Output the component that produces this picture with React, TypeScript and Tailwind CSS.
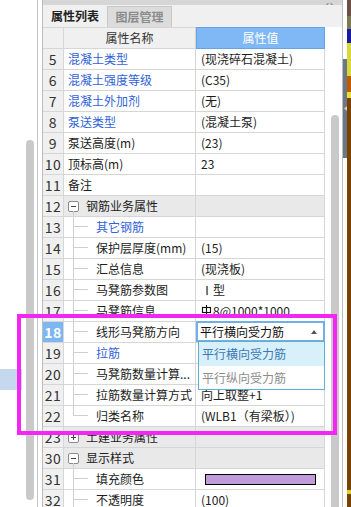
import React from "react";

type Row = {
  n: number;
  name: string;
  value?: string;
  kind?: "plain" | "group" | "child";
  blue?: boolean;
  last?: boolean;
  open?: boolean;
  special?: "rebar" | "dropdown" | "swatch";
};

const rows: Row[] = [
  { n: 5, name: "混凝土类型", value: "(现浇碎石混凝土)", blue: true },
  { n: 6, name: "混凝土强度等级", value: "(C35)", blue: true },
  { n: 7, name: "混凝土外加剂", value: "(无)", blue: true },
  { n: 8, name: "泵送类型", value: "(混凝土泵)", blue: true },
  { n: 9, name: "泵送高度(m)", value: "(23)" },
  { n: 10, name: "顶标高(m)", value: "23" },
  { n: 11, name: "备注", value: "" },
  { n: 12, name: "钢筋业务属性", kind: "group", open: true },
  { n: 13, name: "其它钢筋", kind: "child", blue: true },
  { n: 14, name: "保护层厚度(mm)", value: "(15)", kind: "child" },
  { n: 15, name: "汇总信息", value: "(现浇板)", kind: "child" },
  { n: 16, name: "马凳筋参数图", value: "Ⅰ型", kind: "child" },
  { n: 17, name: "马凳筋信息", value: "8@1000*1000", kind: "child", special: "rebar" },
  { n: 18, name: "线形马凳筋方向", kind: "child", special: "dropdown" },
  { n: 19, name: "拉筋", kind: "child", blue: true },
  { n: 20, name: "马凳筋数量计算...", value: "", kind: "child" },
  { n: 21, name: "拉筋数量计算方式", value: "向上取整+1", kind: "child" },
  { n: 22, name: "归类名称", value: "(WLB1（有梁板）)", kind: "child", last: true },
  { n: 23, name: "土建业务属性", kind: "group", open: false },
  { n: 30, name: "显示样式", kind: "group", open: true },
  { n: 31, name: "填充颜色", kind: "child", special: "swatch" },
  { n: 32, name: "不透明度", value: "(100)", kind: "child" },
];

function Toggle({ open }: { open?: boolean }) {
  return (
    <div className="relative w-[11px] h-[11px] shrink-0 border border-[#8a8a8a] rounded-[2px] bg-white flex items-center justify-center">
      <div className="w-[5px] h-px bg-[#444]" />
      {!open && <div className="absolute w-px h-[5px] bg-[#444]" />}
    </div>
  );
}

function RebarMark() {
  return (
    <svg width="11" height="12" viewBox="0 0 11 12" className="shrink-0 mr-px">
      <rect x="1.5" y="2.5" width="8" height="5" fill="none" stroke="#111" strokeWidth="1.1" />
      <line x1="5.5" y1="0" x2="5.5" y2="10.5" stroke="#111" strokeWidth="1.1" />
      <line x1="0.5" y1="10.5" x2="10.5" y2="10.5" stroke="#111" strokeWidth="1.1" />
    </svg>
  );
}

function NameCell({ r }: { r: Row }) {
  const color = r.blue ? "text-[#2f62d8]" : "text-[#1c1c1c]";
  if (r.kind === "group") {
    return (
      <div className="relative w-[132px] shrink-0 flex items-center pl-[4px] bg-[#e9e9e9] border-r border-b border-[#d6d6d6]">
        <Toggle open={r.open} />
        <span className="ml-[7px] text-[#1c1c1c]">{r.name}</span>
        {r.open && <div className="absolute left-[9px] bottom-0 h-[5px] w-px bg-[#cfcfcf]" />}
      </div>
    );
  }
  if (r.kind === "child") {
    return (
      <div className="w-[132px] shrink-0 flex items-stretch bg-white border-r border-b border-[#d6d6d6]">
        <div className="w-[9px] shrink-0" />
        <div className="w-[15px] shrink-0 flex flex-col">
          <div className="h-[10px] shrink-0 border-l border-b border-[#cfcfcf]" />
          <div className={`flex-1 border-l ${r.last ? "border-transparent" : "border-[#cfcfcf]"}`} />
        </div>
        <span className={`ml-[8px] self-center whitespace-nowrap ${color}`}>{r.name}</span>
      </div>
    );
  }
  return (
    <div className="w-[132px] shrink-0 flex items-center pl-[4px] bg-white border-r border-b border-[#d6d6d6]">
      <span className={`whitespace-nowrap ${color}`}>{r.name}</span>
    </div>
  );
}

function ValueCell({ r }: { r: Row }) {
  const group = r.kind === "group";
  if (r.special === "dropdown") {
    return (
      <div className="relative w-[129px] shrink-0 border-r border-b border-[#d6d6d6] bg-white">
        <div className="absolute -top-px left-0 right-[-1px] h-[21px] border-2 border-[#72aee9] bg-white flex items-center pl-[2px] pr-[6px] z-10">
          <span className="flex-1 text-[#111]">平行横向受力筋</span>
          <svg width="6" height="4" viewBox="0 0 6 4">
            <polygon points="3,0 6,4 0,4" fill="#555" />
          </svg>
        </div>
        <div className="absolute top-[19px] left-[2px] right-[-1px] border border-[#5eafd2] bg-white z-20 flex flex-col">
          <div className="h-[24px] flex items-center pl-[3px] bg-[#d8f0fa] text-[#3b78b6]">平行横向受力筋</div>
          <div className="h-[23px] flex items-center pl-[3px] text-[#8d8d8d]">平行纵向受力筋</div>
        </div>
      </div>
    );
  }
  return (
    <div className={`w-[129px] shrink-0 flex items-center pl-[5px] border-r border-b border-[#d6d6d6] whitespace-nowrap text-[#1c1c1c] ${group ? "bg-[#e9e9e9]" : "bg-white"}`}>
      {r.special === "rebar" && <RebarMark />}
      {r.special === "swatch" ? (
        <div className="ml-[4px] w-[111px] h-[11px] border border-black bg-[#c09ad9]" />
      ) : (
        <span>{r.value}</span>
      )}
    </div>
  );
}

function TableRow({ r }: { r: Row }) {
  const sel = r.special === "dropdown";
  return (
    <div className="flex h-[21px] shrink-0">
      <div
        className={`w-[21px] shrink-0 flex items-center justify-center border-r border-b border-[#d6d6d6] text-[14px] tracking-[0.5px] ${
          sel ? "bg-[#7db7f3] text-white font-bold" : "bg-[#f0f0f0] text-[#333]"
        }`}
      >
        {r.n}
      </div>
      <NameCell r={r} />
      <ValueCell r={r} />
    </div>
  );
}

export default function App() {
  return (
    <div className="relative w-[351px] h-[507px] overflow-hidden bg-white flex font-['Noto_Sans_CJK_SC',sans-serif] text-[12px] leading-none">
      {/* left side */}
      <div className="w-[22px] shrink-0 pt-[369px]">
        <div className="h-[21px] bg-[#c6d8ee]" />
      </div>
      <div className="w-[4px] shrink-0" />
      <div className="w-[8px] shrink-0 pt-[140px]">
        <div className="h-[360px] rounded-full bg-[#c9c9c9]" />
      </div>
      <div className="w-[3px] shrink-0" />
      <div className="w-px shrink-0 bg-[#c4c4c4]" />
      <div className="w-[4px] shrink-0" />

      {/* panel */}
      <div className="w-[301px] shrink-0 flex flex-col border-x border-[#bdbdbd] overflow-hidden">
        <div className="h-[5px] shrink-0 bg-[#d6d6d6] flex justify-end items-end overflow-hidden">
          <div className="relative w-[9px] h-[3px] mr-[8px]">
            <div className="absolute left-0 bottom-0 w-[4px] h-px bg-[#888] rotate-[-45deg]" />
            <div className="absolute right-0 bottom-0 w-[4px] h-px bg-[#888] rotate-[45deg]" />
          </div>
        </div>
        <div className="h-[22px] shrink-0 flex bg-[#f0f0f0]">
          <div className="w-[64px] flex items-center justify-center font-bold text-[#222]">属性列表</div>
          <div className="w-[65px] mt-px flex items-center justify-center font-bold text-[#8c8c8c] bg-[#dcdcdc] border-x border-t border-[#c8c8c8]">
            图层管理
          </div>
        </div>
        <div className="flex flex-1 min-h-0">
          <div className="w-[282px] shrink-0 flex flex-col">
            <div className="flex h-[22px] shrink-0 border-t border-[#d6d6d6]">
              <div className="w-[21px] shrink-0 bg-[#f0f0f0] border-r border-b border-[#d6d6d6]" />
              <div className="w-[132px] shrink-0 bg-[#f0f0f0] border-r border-b border-[#d6d6d6] flex items-center justify-center text-[#333]">
                属性名称
              </div>
              <div className="w-[129px] shrink-0 bg-[#80b8f5] border border-[#66a3e6] -mt-px flex items-center justify-center text-white">
                属性值
              </div>
            </div>
            {rows.map((r) => (
              <TableRow key={r.n} r={r} />
            ))}
          </div>
          <div className="w-[17px] shrink-0 bg-white pt-[88px] pl-[6px]">
            <div className="w-[8px] h-[420px] rounded-full bg-[#c9c9c9]" />
          </div>
        </div>
      </div>

      {/* right edge */}
      <div className="w-[4px] shrink-0 pt-[59px]">
        <div className="h-[99px] bg-[#6b7784] flex items-center justify-center">
          <svg width="3" height="5" viewBox="0 0 3 5">
            <polygon points="3,0 3,5 0,2.5" fill="#c8ccd0" />
          </svg>
        </div>
      </div>
      <div className="w-[4px] shrink-0 flex flex-col">
        <div className="h-[16px] shrink-0 bg-[#6b4f47]" />
        <div className="h-[13px] shrink-0 bg-[#7b7a52]" />
        <div className="h-[14px] shrink-0 bg-[#1a1a9c]" />
        <div className="h-[33px] shrink-0 bg-[#d8d83a]" />
        <div className="h-[16px] shrink-0 bg-[#c05c00]" />
        <div className="h-[6px] shrink-0 bg-[#e6df34]" />
        <div className="h-[392px] shrink-0 bg-[#7a4100]" />
        <div className="h-[4px] shrink-0 bg-[#e0d030]" />
        <div className="flex-1 bg-[#7a4100]" />
      </div>

      {/* highlight annotation */}
      <div className="absolute left-[17px] top-[314px] w-[320px] h-[121px] border-4 border-[#f326f3] z-30 pointer-events-none" />
    </div>
  );
}
